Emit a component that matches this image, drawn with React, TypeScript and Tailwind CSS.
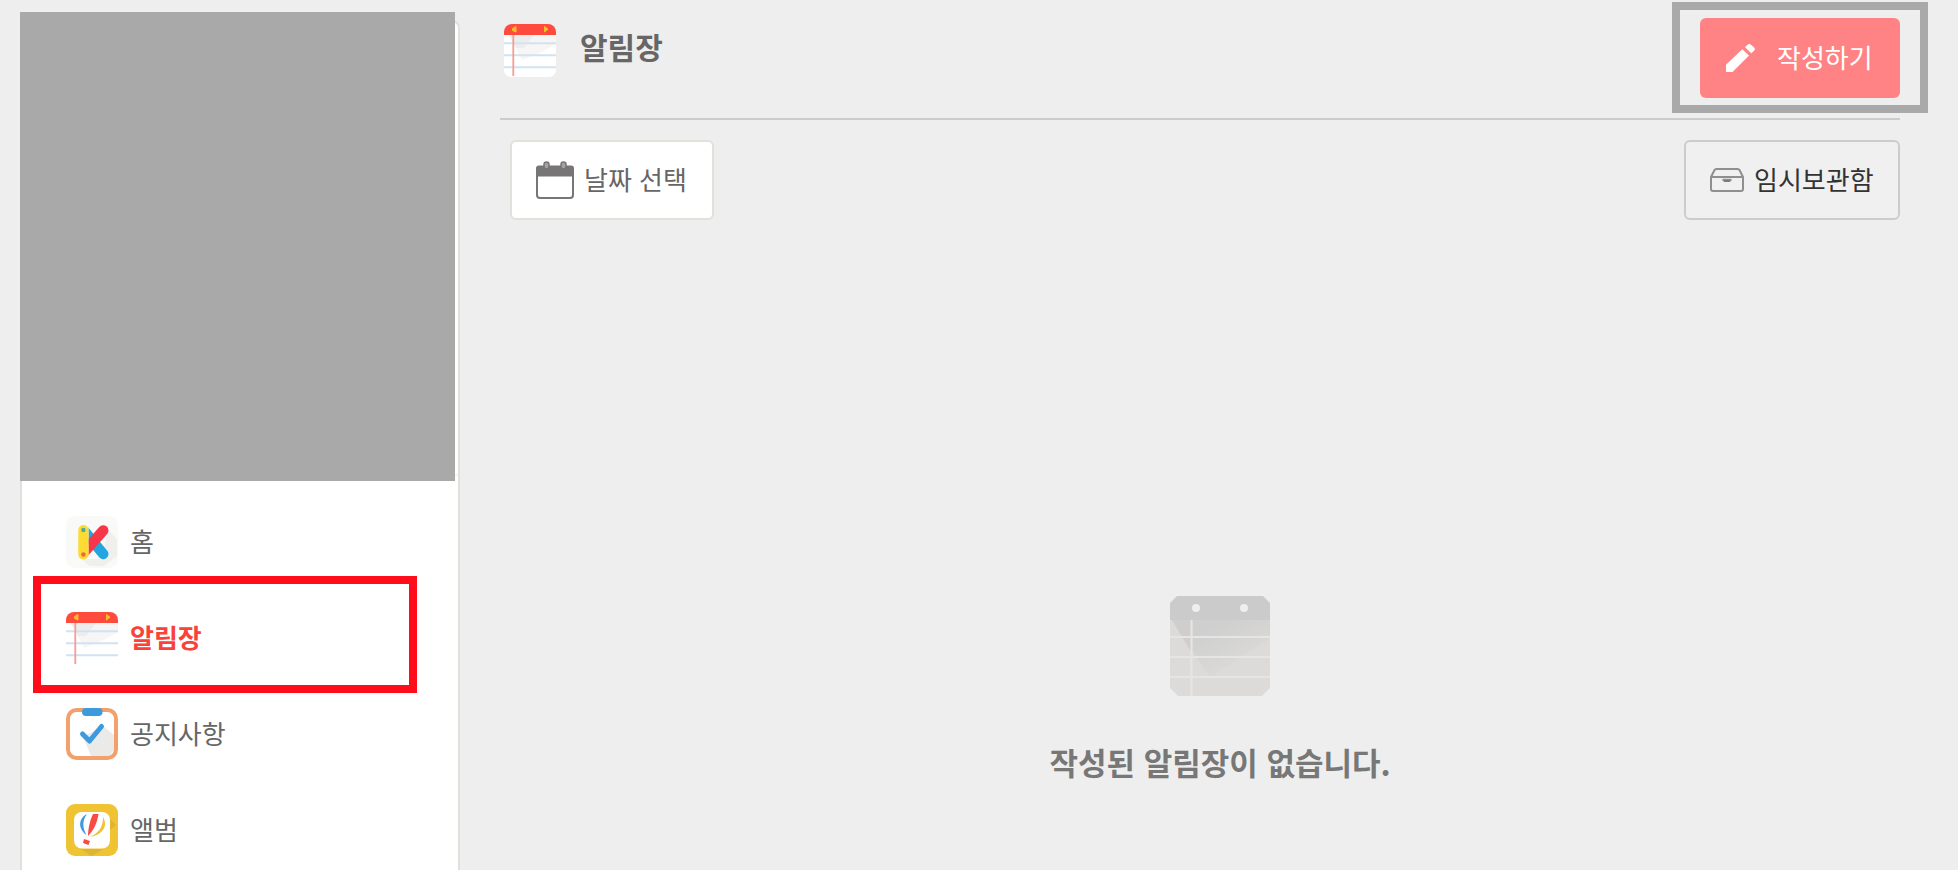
import { ReactNode, useState } from 'react';
import clsx from 'clsx';

function NoteIcon() {
  return (
    <svg viewBox="0 0 52 53" className="w-[52px] h-[53px] shrink-0" aria-hidden="true">
      <rect y="1" width="52" height="52" rx="7" fill="#ffffff" />
      <path d="M5 11H52V20L38 28L18 36Z" fill="#f7f6f5" />
      <path d="M5 11H30L20 24H12Z" fill="#efedec" />
      <path d="M0 11V8a8 8 0 0 1 8-8H44a8 8 0 0 1 8 8v3Z" fill="#ff4b3e" />
      <path d="M0 19.300H52M0 31.300H52M0 43.300H52" stroke="#cfe4f1" strokeWidth="2" />
      <path d="M9.300 11V52" stroke="#f99b93" strokeWidth="1.800" />
      <path d="M12 2.500V8L8.500 6.500V4.500Z" fill="#f5bd2a" stroke="#f5bd2a" />
      <path d="M40.500 2.500V8L44 5.200Z" fill="#f5bd2a" stroke="#f5bd2a" />
    </svg>
  );
}

function HomeIcon() {
  return (
    <svg viewBox="0 0 52 52" className="w-[52px] h-[52px] shrink-0" aria-hidden="true">
      <defs>
        <clipPath id="home-k">
          <rect x="22.500" width="30" height="52" />
        </clipPath>
      </defs>
      <rect width="52" height="52" rx="9" fill="#f9f9f7" />
      <path d="M42 13L51 24V40L38 50H24L15 43H36Z" fill="#efefed" />
      <g clipPath="url(#home-k)" strokeWidth="10.500" strokeLinecap="round">
        <path d="M18 14.500L37.200 38" stroke="#21a6e0" />
        <path d="M37.200 14.500L17 37.500" stroke="#f73648" />
      </g>
      <rect x="12.300" y="9" width="10.200" height="34.500" rx="5" fill="#fddb32" />
      <circle cx="17.400" cy="14" r="2.200" fill="#52ab98" />
      <circle cx="17.400" cy="38.500" r="2.200" fill="#f4633c" />
    </svg>
  );
}

function NoticeIcon() {
  return (
    <svg viewBox="0 0 52 52" className="w-[52px] h-[52px] shrink-0" aria-hidden="true">
      <rect x="2" y="2" width="48" height="48" rx="8" fill="#ffffff" />
      <path d="M17 29L37 18L48 27V42L43 48H25Z" fill="#eaeae9" />
      <rect x="2" y="2" width="48" height="48" rx="8.500" fill="none" stroke="#f2a06c" strokeWidth="4" />
      <rect x="16" y="0" width="20.500" height="8" rx="4" fill="#3d9bdd" />
      <path d="M16.500 26L23.500 33L35.500 18.500" fill="none" stroke="#3d9bdd" strokeWidth="5" strokeLinecap="round" strokeLinejoin="round" />
    </svg>
  );
}

function AlbumIcon() {
  return (
    <svg viewBox="0 0 52 52" className="w-[52px] h-[52px] shrink-0" aria-hidden="true">
      <rect width="52" height="52" rx="9" fill="#f0c333" />
      <path d="M44 15L50 21L44 26ZM15 45H37L31 49L25 52Z" fill="#dfb52f" />
      <rect x="8" y="8" width="36" height="36.500" rx="8" fill="#ffffff" />
      <path d="M21 10C13 14 11 24 20.500 31C16 23 16.500 16 21 10Z" fill="#3d9bdd" />
      <path d="M27 10L32.500 10C31 20 27 27 22 32C22 25 24 16 27 10Z" fill="#f94a45" />
      <path d="M37 13C43 23 35 31 24.500 33C34 28 37 22 37 13Z" fill="#f0c333" />
      <path d="M18 35L24 37L22.500 41L17 39Z" fill="#f94a45" />
    </svg>
  );
}

function PencilIcon() {
  return (
    <svg viewBox="0 0 29 28" className="w-[29px] h-[28px] shrink-0" aria-hidden="true">
      <path d="M0 28V20.800L16.300 5.200L23 11.500L6.500 28Z" fill="#ffffff" />
      <path d="M19 3.200L21.300 1a3 3 0 0 1 4 0L27.800 3.200a2.500 2.500 0 0 1 0 3.800L25.300 9.200Z" fill="#ffffff" />
    </svg>
  );
}

function CalendarIcon() {
  return (
    <svg viewBox="0 0 38 38" className="w-[38px] h-[38px] shrink-0" aria-hidden="true">
      <rect x="1" y="6" width="36" height="31" rx="3" fill="#ffffff" stroke="#777576" strokeWidth="2" />
      <path d="M0 15.500V7.500a3 3 0 0 1 3-3H35a3 3 0 0 1 3 3v8Z" fill="#777576" />
      <rect x="8" y="1" width="5" height="7" rx="2.500" fill="#a5a3a4" stroke="#777576" strokeWidth="1.500" />
      <rect x="25" y="1" width="5" height="7" rx="2.500" fill="#a5a3a4" stroke="#777576" strokeWidth="1.500" />
    </svg>
  );
}

function DrawerIcon() {
  return (
    <svg viewBox="0 0 34 24" className="w-[34px] h-[24px] shrink-0" fill="none" stroke="#8f8f8f" strokeWidth="2" aria-hidden="true">
      <path d="M1 9L4.500 2Q5 1 6.500 1H27.500Q29 1 29.500 2L33 9V21Q33 23 31 23H3Q1 23 1 21Z" strokeLinejoin="round" />
      <path d="M1 9H33" />
      <path d="M12.500 12H21.500" strokeWidth="2.500" />
      <path d="M14 13H20" stroke="#7c7c7c" />
    </svg>
  );
}

function EmptyNoteIcon() {
  return (
    <svg viewBox="0 0 100 100" className="w-[100px] h-[100px]" aria-hidden="true">
      <defs>
        <linearGradient id="empty-shade" x1="0.200" y1="0.300" x2="0.700" y2="0.900">
          <stop offset="0" stopColor="#cfcfcf" />
          <stop offset="1" stopColor="#dcdbd9" />
        </linearGradient>
      </defs>
      <path d="M0 24H100V92L92 100H8L0 92Z" fill="#dcdbd9" />
      <path d="M2 24H100V42L40 82Z" fill="url(#empty-shade)" />
      <path d="M2 24H21V56Z" fill="#d0cecc" />
      <path d="M0 41H100M0 61H100M0 81H100M21.500 24V100" stroke="#e6e5e4" strokeWidth="2.200" />
      <path d="M0 24V7L7 0H93L100 7V24Z" fill="#cbcbcb" />
      <circle cx="26" cy="12" r="4" fill="#eeeeee" />
      <circle cx="74" cy="12" r="4" fill="#eeeeee" />
    </svg>
  );
}

const menuItems: { id: string; label: string; icon: ReactNode }[] = [
  { id: 'home', label: '홈', icon: <HomeIcon /> },
  { id: 'reports', label: '알림장', icon: <NoteIcon /> },
  { id: 'notices', label: '공지사항', icon: <NoticeIcon /> },
  { id: 'albums', label: '앨범', icon: <AlbumIcon /> },
];

function Sidebar() {
  const [active, setActive] = useState('reports');

  return (
    <aside className="w-[440px] shrink-0 pt-5">
      <div className="min-h-full bg-white border-2 border-b-0 border-[#e3e0dc] rounded-t-lg">
        {/* profile */}
        <div className="relative h-[454px] border-b-2 border-[#f5f5f5]">
          <div className="absolute -top-[10px] -left-[2px] w-[435px] h-[469px] bg-[#a9a9a9]" />
        </div>
        <nav className="pt-[18px]">
          <ul>
            {menuItems.map((item) => (
              <li key={item.id} className="relative h-24">
                <a
                  href={`#${item.id}`}
                  onClick={() => setActive(item.id)}
                  className={clsx(
                    'flex items-center h-full pl-11 gap-3 text-[26px] leading-8',
                    active === item.id ? 'font-bold text-[#f9423a]' : 'text-[#666666]'
                  )}
                >
                  {item.icon}
                  <span className="pb-0.5">{item.label}</span>
                </a>
                {active === item.id && (
                  <div className="pointer-events-none absolute left-[11px] right-[41px] -top-[14px] -bottom-[7px] border-8 border-[#ff0d1b]" />
                )}
              </li>
            ))}
          </ul>
        </nav>
      </div>
    </aside>
  );
}

export default function App() {
  return (
    <div
      lang="ko"
      className="flex h-screen overflow-hidden bg-[#eeeeee] pl-5 font-['Noto_Sans_CJK_KR',sans-serif]"
    >
      <Sidebar />

      <main className="flex-1 min-w-0 pl-10 pr-[18px]">
        <header className="flex items-start justify-between h-[120px] mr-10 pt-[18px] border-b-2 border-[#cccccc]">
          <div className="flex items-center gap-6 h-16 pl-1">
            <NoteIcon />
            <h1 className="pb-2 text-[30px] leading-10 font-bold text-[#666666]">알림장</h1>
          </div>
          <div className="relative">
            <button
              type="button"
              className="flex items-center gap-[22px] h-20 min-w-[200px] px-[26px] bg-[#ff8384] rounded-md text-[26px] leading-8 text-white"
            >
              <PencilIcon />
              <span className="pb-0.5">작성하기</span>
            </button>
            <div className="pointer-events-none absolute -inset-x-7 -top-4 -bottom-[15px] border-8 border-[#a9a9a9]" />
          </div>
        </header>

        <div className="flex justify-between mt-5 mr-10 pl-[10px]">
          <button
            type="button"
            className="flex items-center gap-[10px] h-20 min-w-[204px] px-6 bg-white border-2 border-[#e3e0dc] rounded-md text-[26px] leading-8 text-[#666666]"
          >
            <CalendarIcon />
            <span className="pb-0.5">날짜 선택</span>
          </button>
          <button
            type="button"
            className="flex items-center gap-[10px] h-20 min-w-[216px] px-6 bg-[#f0f0f0] border-2 border-[#cccccc] rounded-md text-[26px] leading-8 text-[#333333]"
          >
            <DrawerIcon />
            <span className="pb-0.5">임시보관함</span>
          </button>
        </div>

        <section className="flex flex-col items-center gap-[42px] pt-[376px]">
          <EmptyNoteIcon />
          <p className="text-[31px] leading-12 font-bold text-[#777777]">작성된 알림장이 없습니다.</p>
        </section>
      </main>
    </div>
  );
}
